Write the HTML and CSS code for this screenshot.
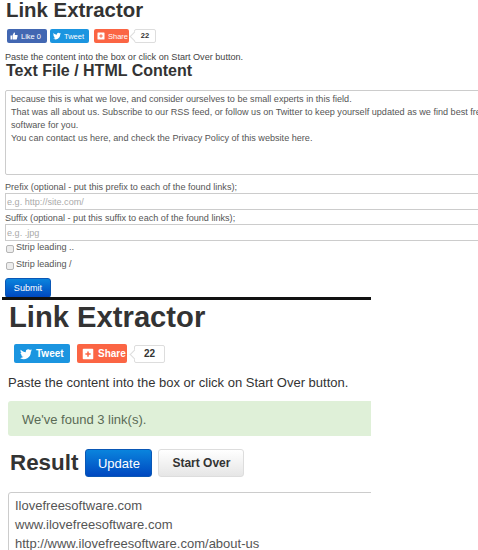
FILE: index.html
```html
<!DOCTYPE html>
<html lang="en">
<head>
<meta charset="utf-8">
<title>Link Extractor</title>
<link rel="stylesheet" href="styles.css">
</head>
<body>
<section class="top">
  <h1 class="top-title">Link Extractor</h1>
  <div class="share small">
    <span class="sbtn fb"><svg viewBox="0 0 16 16" class="ic"><path d="M1 7h3v8H1zM5 7l3-6c1.500 0 2 1 2 2l-.5 3H14c1 0 1.500 1 1.200 2l-1.500 6c-.2.700-.7 1-1.400 1H5z" fill="#fff"/></svg>Like 0</span>
    <span class="sbtn tw"><svg viewBox="0 0 16 16" class="ic"><path d="M16 3.100c-.6.300-1.200.4-1.900.5.700-.4 1.200-1 1.400-1.800-.6.400-1.300.6-2.100.8a3.300 3.300 0 0 0-5.600 3C5.100 5.500 2.700 4.200 1.100 2.200.2 3.700.7 5.600 2.100 6.600c-.5 0-1-.2-1.500-.4 0 1.600 1.100 3 2.600 3.300-.5.100-1 .1-1.500 0 .4 1.300 1.600 2.200 3.100 2.300A6.600 6.600 0 0 1 0 13.200 9.300 9.300 0 0 0 14.400 5c.6-.5 1.200-1.100 1.600-1.900z" fill="#fff"/></svg>Tweet</span>
    <span class="sbtn gp"><svg viewBox="0 0 16 16" class="ic"><path fill-rule="evenodd" d="M2 1h12a1 1 0 0 1 1 1v12a1 1 0 0 1-1 1H2a1 1 0 0 1-1-1V2a1 1 0 0 1 1-1zm5 3.500v2.500H4.500v2H7v2.500h2V9h2.500V7H9V4.500z" fill="#fff"/></svg>Share</span>
    <span class="count">22</span>
  </div>
  <p class="top-hint">Paste the content into the box or click on Start Over button.</p>
  <h2 class="top-sub">Text File / HTML Content</h2>
  <div class="content-box">
    <p>because this is what we love, and consider ourselves to be small experts in this field.</p>
    <p>That was all about us. Subscribe to our RSS feed, or follow us on Twitter to keep yourself updated as we find best free software for you.</p>
    <p>You can contact us here, and check the Privacy Policy of this website here.</p>
  </div>
  <label class="field-label">Prefix (optional - put this prefix to each of the found links);</label>
  <input class="field" type="text" placeholder="e.g. http://site.com/">
  <label class="field-label">Suffix (optional - put this suffix to each of the found links);</label>
  <input class="field" type="text" placeholder="e.g. .jpg">
  <label class="check"><input type="checkbox"><span>Strip leading ..</span></label>
  <label class="check"><input type="checkbox"><span>Strip leading /</span></label>
  <button class="btn primary submit" type="button">Submit</button>
</section>
<section class="bottom">
  <h1 class="bottom-title">Link Extractor</h1>
  <div class="share large">
    <span class="sbtn tw"><svg viewBox="0 0 16 16" class="ic"><path d="M16 3.100c-.6.300-1.200.4-1.900.5.700-.4 1.200-1 1.400-1.800-.6.400-1.300.6-2.100.8a3.300 3.300 0 0 0-5.600 3C5.100 5.500 2.700 4.200 1.100 2.200.2 3.700.7 5.600 2.100 6.600c-.5 0-1-.2-1.500-.4 0 1.600 1.100 3 2.600 3.300-.5.100-1 .1-1.500 0 .4 1.300 1.600 2.200 3.100 2.300A6.600 6.600 0 0 1 0 13.200 9.300 9.300 0 0 0 14.400 5c.6-.5 1.200-1.100 1.600-1.900z" fill="#fff"/></svg>Tweet</span>
    <span class="sbtn gp"><svg viewBox="0 0 16 16" class="ic"><path fill-rule="evenodd" d="M2 1h12a1 1 0 0 1 1 1v12a1 1 0 0 1-1 1H2a1 1 0 0 1-1-1V2a1 1 0 0 1 1-1zm5 3.500v2.500H4.500v2H7v2.500h2V9h2.500V7H9V4.500z" fill="#fff"/></svg>Share</span>
    <span class="count">22</span>
  </div>
  <p class="bottom-hint">Paste the content into the box or click on Start Over button.</p>
  <div class="clip">
    <div class="alert">We've found 3 link(s).</div>
    <div class="result-head">
      <h2 class="result-title">Result</h2>
      <button class="btn primary update" type="button">Update</button>
      <button class="btn plain" type="button">Start Over</button>
    </div>
    <div class="result-box">
      <div>Ilovefreesoftware.com</div>
      <div>www.ilovefreesoftware.com</div>
      <div>http://www.ilovefreesoftware.com/about-us</div>
    </div>
  </div>
</section>
</body>
</html>
```

FILE: styles.css
```css
* { box-sizing: border-box; }
html, body { margin: 0; padding: 0; height: 550px; overflow: hidden; background: #fff; }
body { font-family: "Liberation Sans", Arial, sans-serif; color: #333; }
h1, h2, p { margin: 0; }

.top { width: 478px; height: 297px; padding: 0 0 0 5px; overflow: hidden; }
.top-title { font-size: 20.400px; line-height: 20px; margin-left: 1px; color: #333; }
.share { display: flex; align-items: center; }
.small { margin: 9px 0 0 2px; gap: 3px; height: 14px; }
.sbtn { display: inline-flex; align-items: center; color: #fff; border-radius: 2px; }
.small .sbtn { height: 14px; font-size: 7.500px; padding: 0 3px; }
.small .ic { width: 8px; height: 8px; margin-right: 3px; flex: none; }
.fb { background: #4267b2; }
.tw { background: #1b95e0; }
.gp { background: #fb6544; }
.small .fb { width: 40px; }
.small .tw { width: 39px; }
.small .gp { width: 35px; margin-left: 2px; }
.count { position: relative; background: #fff; border: 1px solid #ddd; border-radius: 2px; font-weight: bold; color: #333; text-align: center; }
.count::before { content: ""; position: absolute; top: 50%; left: -4px; width: 6px; height: 6px; margin-top: -3px; background: #fff; border-left: 1px solid #ddd; border-bottom: 1px solid #ddd; transform: rotate(45deg); }
.small .count { width: 22px; height: 14px; line-height: 12px; font-size: 7.500px; margin-left: 2px; }
.top-hint { font-size: 9.100px; line-height: 10px; margin-top: 9px; color: #444; }
.top-sub { font-size: 16px; line-height: 18px; margin: 0 0 0 1px; }
.content-box { width: 515px; height: 85px; margin-top: 10px; padding: 2px 5px; border: 1px solid #ccc; border-radius: 2px; font-size: 9.100px; line-height: 13px; color: #555; overflow: hidden; }
.field-label { display: block; font-size: 9.100px; line-height: 11px; color: #555; margin-top: 3px; }
.content-box + .field-label { margin-top: 7px; }
.field { display: block; width: 480px; height: 17px; margin: 0; padding: 0 1px; border: 1px solid #ccc; font: 9.100px "Liberation Sans", Arial, sans-serif; }
.field::placeholder { color: #aaa; }
.check { display: flex; align-items: flex-start; gap: 2px; height: 16px; font-size: 9.100px; line-height: 11px; color: #555; margin-top: 1px; }
.check input { appearance: none; margin: 3px 0 0 1px; width: 8px; height: 8px; border: 1px solid #b5b5b5; border-radius: 2px; background: #ededed; }
.btn { font-family: "Liberation Sans", Arial, sans-serif; border-radius: 3px; cursor: pointer; }
.primary { color: #fff; border: 1px solid #0a57b5; background: linear-gradient(#0a84dd, #0048c0); }
.submit { display: block; width: 46px; height: 20px; margin-top: 3px; padding: 0; font-size: 9.100px; }

.bottom { width: 369px; height: 253px; margin-left: 2px; padding: 0 0 0 6px; border-top: 3px solid #111; overflow: hidden; }
.bottom-title { font-size: 29.200px; line-height: 34px; margin: 0 0 0 1px; color: #333; }
.large { margin: 10px 0 0 6px; height: 19px; gap: 7px; }
.large .sbtn { height: 19px; font-size: 10px; font-weight: bold; }
.large .ic { width: 12px; height: 12px; margin-right: 4px; flex: none; }
.large .tw { width: 56px; padding-left: 6px; }
.large .gp { width: 50px; padding-left: 5px; }
.large .count { width: 31px; height: 18px; line-height: 16px; font-size: 10px; }
.bottom-hint { font-size: 13px; line-height: 14px; margin-top: 13px; }
.clip { width: 363px; }
.alert { width: 380px; height: 35px; margin-top: 11px; padding: 1px 14px 0; line-height: 35px; font-size: 13px; color: #5a6a55; background: #dff0d8; border-radius: 3px; }
.result-head { display: flex; align-items: center; height: 30px; margin-top: 12px; margin-left: 2px; }
.result-title { font-size: 22.400px; line-height: 30px; }
.update { width: 67px; height: 28px; margin-left: 7px; font-size: 13px; padding: 0; }
.plain { width: 86px; height: 28px; margin-left: 6px; padding: 0; font-size: 12px; font-weight: bold; color: #333; border: 1px solid #ddd; background: linear-gradient(#fff, #e6e6e6); }
.result-box { width: 380px; height: 80px; margin-top: 14px; padding: 3px 6px; border: 1px solid #ccc; border-radius: 3px; font-size: 13px; line-height: 19px; color: #555; }
```
